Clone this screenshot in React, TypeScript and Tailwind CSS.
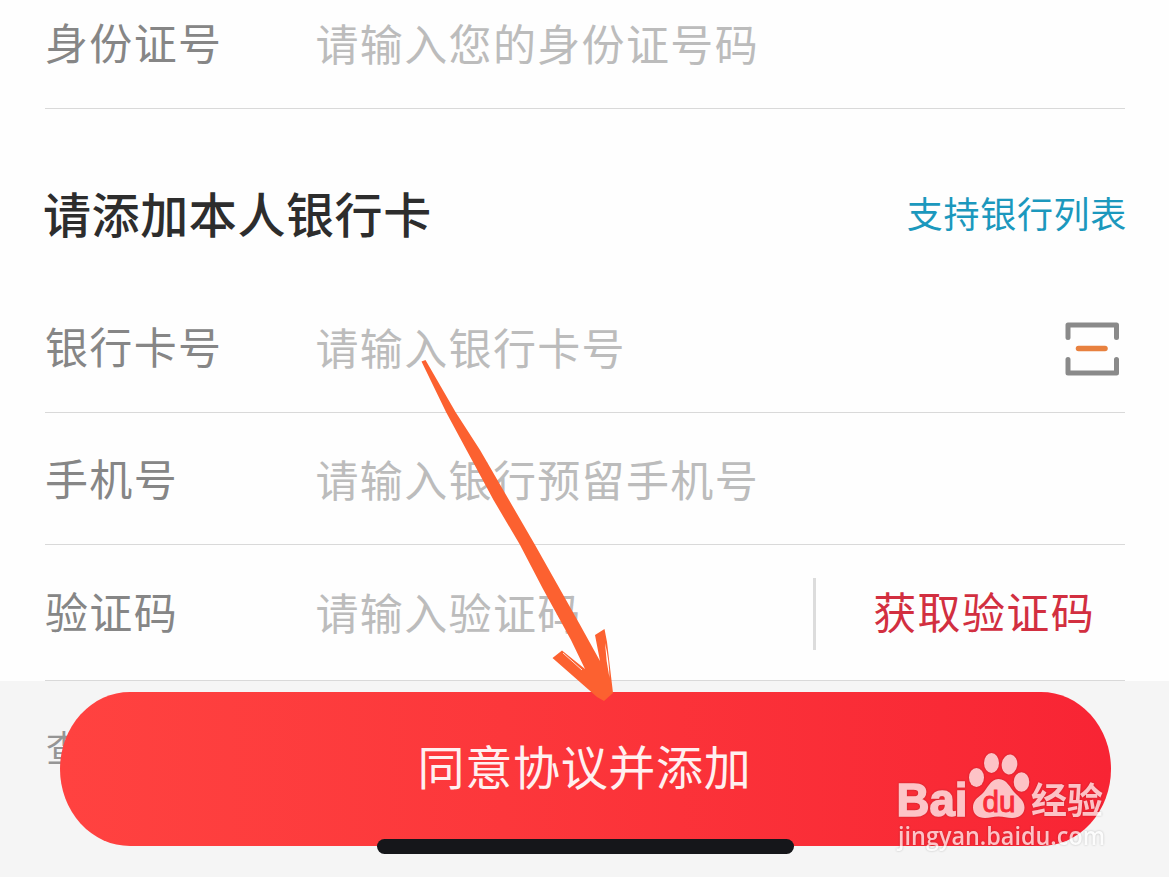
import type { ReactNode } from 'react';
import { clsx } from 'clsx';

interface FieldRowProps {
  label: string;
  placeholder: string;
  className?: string;
  children?: ReactNode;
}

function FieldRow({ label, placeholder, className, children }: FieldRowProps) {
  return (
    <div
      className={clsx(
        'mr-[44px] ml-[45px] flex flex-shrink-0 items-center border-b border-[#d9d9d9] text-[43px] leading-none tracking-[1.35px] whitespace-nowrap',
        className
      )}
    >
      <span className="w-[270px] flex-shrink-0 pb-[2px] text-[#868686]">{label}</span>
      <span className="flex-1 pl-[0.5px] text-[#bcbcbc]">{placeholder}</span>
      {children}
    </div>
  );
}

function ScanIcon() {
  return (
    <svg className="mt-[5px] mr-[6px] h-[54px] w-[54px]" viewBox="0 0 54 54" fill="none" strokeLinecap="round">
      <path
        d="M3 15.5V3H51.5V15.5M3 37.5V51H51.5V37.5"
        stroke="#8a8a8a"
        strokeWidth="5"
        strokeLinejoin="round"
      />
      <path d="M13.5 26.5H40" stroke="#e8813f" strokeWidth="5.5" />
    </svg>
  );
}

// Hand-drawn arrow pointing at the submit button
function PointerArrow() {
  return (
    <svg className="pointer-events-none absolute top-[355px] left-[415px]" width="205" height="350" viewBox="415 355 205 350">
      <path
        d="M421.5 361.5L425.5 360L455.5 412L480 450L509 500L534.5 544L579 623L600 661L595 635L604.5 629L607 642L613 693L604 701L597 697L552.5 658L562 650.5L585 669L571 640L543 589L519.5 544L493.5 500L466.5 450L446 412Z"
        fill="#fc6130"
      />
      <path d="M563 653L582 670" stroke="#fff" strokeWidth="0.8" />
      <path d="M605 643Q609 659 609.5 678Q606 661 605 643Z" fill="#fff" />
    </svg>
  );
}

function Watermark() {
  return (
    <svg className="pointer-events-none absolute top-[745px] left-[880px] overflow-visible" width="240" height="120" viewBox="880 745 240 120">
      <g fill="#fff" opacity="0.72" style={{ filter: 'drop-shadow(0 0 1px rgba(0,0,0,0.3))' }}>
        <text
          x="896.5"
          y="816"
          textLength="71"
          lengthAdjust="spacingAndGlyphs"
          stroke="#fff"
          strokeWidth="1.5"
          className="font-['Liberation_Sans'] text-[47px] font-bold"
        >
          Bai
        </text>
        <ellipse cx="976.5" cy="777.5" rx="7.5" ry="9.5" />
        <ellipse cx="991.5" cy="763" rx="7.5" ry="10" />
        <ellipse cx="1009.5" cy="764.5" rx="7.8" ry="10" transform="rotate(8 1009.5 764.5)" />
        <ellipse cx="1021.5" cy="782" rx="7.8" ry="9.8" />
        <path d="M998.5 779C990 779 987.5 789 982 794C977 798 973 801 973 807.5C973 814 978 818 985 818C990 818 993 816.5 998.5 816.5C1004 816.5 1007 818 1012 818C1019 818 1024.5 814 1024.5 807.5C1024.5 801 1019 797 1015 793C1010 788 1007 779 998.5 779Z" />
        <text x="1031" y="814" textLength="72" lengthAdjust="spacingAndGlyphs" className="font-['Noto_Sans_CJK_SC'] text-[36px] font-bold">
          经验
        </text>
        <text x="898" y="845" textLength="207" lengthAdjust="spacingAndGlyphs" className="font-['Open_Sans'] text-[25px] font-semibold">
          jingyan.baidu.com
        </text>
      </g>
      <text
        x="982.5"
        y="811.5"
        textLength="33"
        lengthAdjust="spacingAndGlyphs"
        fill="#f92b38"
        stroke="#f92b38"
        strokeWidth="0.9"
        className="font-['Liberation_Sans'] text-[29px]"
      >
        du
      </text>
    </svg>
  );
}

export default function App() {
  return (
    <div className="relative flex h-[877px] w-[1169px] flex-col overflow-hidden bg-[#fefefe] font-['Noto_Sans_CJK_SC',sans-serif]">
      <FieldRow label="身份证号" placeholder="请输入您的身份证号码" className="h-[109px] pb-[23px]" />

      <div className="mr-[42px] ml-[43px] flex h-[172px] flex-shrink-0 items-center justify-between pt-[34px] leading-none whitespace-nowrap">
        <h2 className="text-[48px] font-medium tracking-[0.6px] text-[#2d2d2d]">请添加本人银行卡</h2>
        <a className="text-[36px] tracking-[0.7px] text-[#1b98bd]">支持银行列表</a>
      </div>

      <FieldRow label="银行卡号" placeholder="请输入银行卡号" className="h-[132px]">
        <ScanIcon />
      </FieldRow>
      <FieldRow label="手机号" placeholder="请输入银行预留手机号" className="h-[132px]" />
      <FieldRow label="验证码" placeholder="请输入验证码" className="h-[136px] pb-[3px]">
        <div className="mt-[6px] flex h-[72px] items-center border-l-[3px] border-[#dcdcdc] pr-[30px] pb-[8px] pl-[57px] text-[#d22f40]">
          获取验证码
        </div>
      </FieldRow>

      {/* Bottom bar, the button covers the agreement line */}
      <div className="relative flex-1 bg-[#f5f5f5] px-[46px] pt-[47px]">
        <p className="text-[36px] leading-none text-[#959595]">查</p>
        <button className="absolute top-[11px] left-[60px] flex h-[154px] w-[1051px] items-center justify-center rounded-[70px/77px] bg-linear-to-r from-[#ff4240] to-[#f82434] pr-[2px] pb-[10px] text-[47px] leading-none tracking-[0.7px] text-[#fff0f0]">
          同意协议并添加
        </button>
        <div className="absolute top-[158px] left-[377px] h-[15px] w-[417px] rounded-full bg-[#15161a]" />
      </div>

      <PointerArrow />
      <Watermark />
    </div>
  );
}
